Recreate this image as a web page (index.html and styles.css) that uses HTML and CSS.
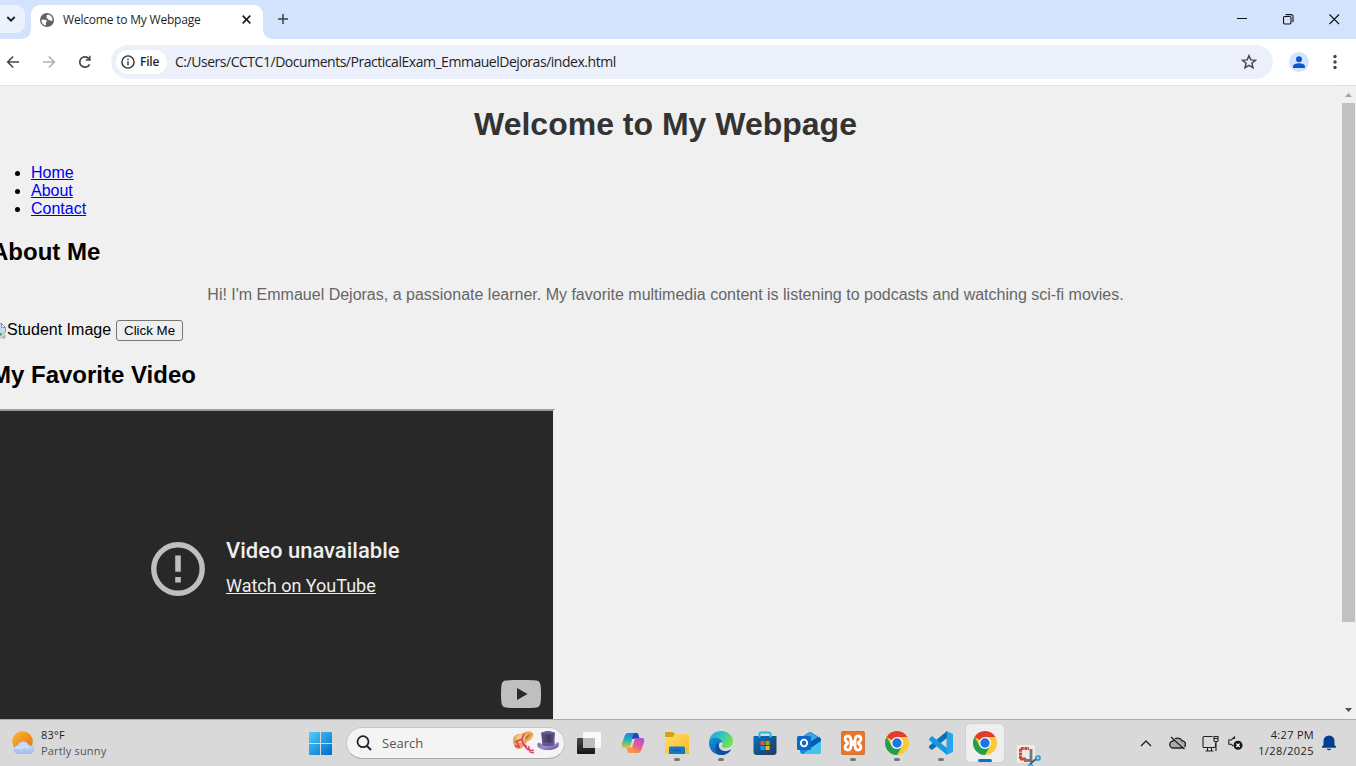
FILE: index.html
```html
<!DOCTYPE html>
<html lang="en">
<head>
<meta charset="utf-8">
<title>Welcome to My Webpage</title>
<link rel="stylesheet" href="styles.css">
</head>
<body>
<svg class="defs" width="0" height="0" aria-hidden="true">
  <defs>
    <linearGradient id="win" x1="0" y1="0" x2="1" y2="1"><stop offset="0" stop-color="#4fd0fb"/><stop offset="1" stop-color="#0068c9"/></linearGradient>
    <linearGradient id="sun" x1="0" y1="0" x2="1" y2="1"><stop offset="0" stop-color="#f3bd2b"/><stop offset="1" stop-color="#ee6a12"/></linearGradient>
    <linearGradient id="cloud" x1="0" y1="0" x2="0" y2="1"><stop offset="0" stop-color="#d3e3fb"/><stop offset="1" stop-color="#a3bff0"/></linearGradient>
    <linearGradient id="folder" x1="0" y1="0" x2="1" y2="1"><stop offset="0" stop-color="#ffdf70"/><stop offset="1" stop-color="#fbb91a"/></linearGradient>
    <linearGradient id="edgeTop" x1="0" y1="0" x2="1" y2=".5"><stop offset="0" stop-color="#239fd8"/><stop offset=".5" stop-color="#31c3c4"/><stop offset="1" stop-color="#6ee352"/></linearGradient>
    <linearGradient id="edgeLow" x1="0" y1="0" x2="1" y2="1"><stop offset="0" stop-color="#1592df"/><stop offset="1" stop-color="#0c4da0"/></linearGradient>
    <linearGradient id="store" x1="0" y1="0" x2="1" y2="1"><stop offset="0" stop-color="#0c6cbd"/><stop offset="1" stop-color="#253858"/></linearGradient>
    <linearGradient id="copA" x1="0" y1="0" x2="0" y2="1"><stop offset="0" stop-color="#1586dd"/><stop offset=".5" stop-color="#28b5b0"/><stop offset="1" stop-color="#e9cb21"/></linearGradient>
    <linearGradient id="copB" x1=".8" y1="0" x2=".3" y2="1"><stop offset="0" stop-color="#a755dc"/><stop offset=".5" stop-color="#ed5b8d"/><stop offset="1" stop-color="#fd9b4b"/></linearGradient>
    <linearGradient id="dark" x1="0" y1="0" x2="0" y2="1"><stop offset="0" stop-color="#484846"/><stop offset="1" stop-color="#161616"/></linearGradient>
    <linearGradient id="hat" x1="0" y1="0" x2="1" y2="0"><stop offset="0" stop-color="#665887"/><stop offset=".6" stop-color="#423460"/><stop offset="1" stop-color="#6d5b9c"/></linearGradient>
    <linearGradient id="brim" x1="0" y1="0" x2="1" y2="1"><stop offset="0" stop-color="#7864a9"/><stop offset=".5" stop-color="#9d8acf"/><stop offset="1" stop-color="#54427f"/></linearGradient>
    <symbol id="chrome" viewBox="0 0 24 24">
      <circle cx="12" cy="12" r="12" fill="#fcc934"/>
      <path d="M12 12 1.61 6A12 12 0 0 1 22.39 6H12z" fill="#e33b2e"/>
      <path d="M1.61 6A12 12 0 0 0 12 24l5.2-9L12 12 6.8 15z" fill="#249d51"/>
      <circle cx="12" cy="12" r="6" fill="#fff"/>
      <circle cx="12" cy="12" r="4.7" fill="#1f73e8"/>
    </symbol>
  </defs>
</svg>
<div class="screen">
  <div class="tabs">
    <div class="tab-search"><svg width="10" height="8" viewBox="0 0 10 8"><path d="M1.3 2 5 5.7 8.7 2" fill="none" stroke="#1f1f1f" stroke-width="1.9"/></svg></div>
    <div class="tab">
      <svg class="globe" width="14" height="14" viewBox="0 0 14 14"><circle cx="7" cy="7" r="7" fill="#5f6368"/><path d="M8.500 1.400C6 2 6.200 3.300 7.200 3.700 5.800 4.400 6.500 5.500 7.500 5.600c1.200.2.2 1.700 1.800 1.700 1.400 0 1.700 1.100 3.100.5A5.800 5.800 0 0 0 8.500 1.400M1.600 6.400c2.100.3 4.500 0 5.200 1.200.6 1.200-.6 1.300-.9 2-.3.900.2 1.500-.1 2.800A5.700 5.700 0 0 1 1.600 6.400" fill="#fff"/></svg>
      <span class="tab-title">Welcome to My Webpage</span>
      <svg class="tab-close" width="9" height="9" viewBox="0 0 9 9"><path d="m.7.7 7.600 7.600m0-7.600L.7 8.300" stroke="#1f1f1f" stroke-width="1.700"/></svg>
    </div>
    <svg class="plus" width="10" height="10" viewBox="0 0 10 10"><path d="M5 0v10M0 5h10" stroke="#3c4043" stroke-width="1.5"/></svg>
    <div class="window-controls">
      <svg width="11" height="11" viewBox="0 0 11 11"><path d="M0 4.500h10" stroke="#111"/></svg>
      <svg width="11" height="11" viewBox="0 0 11 11"><rect x=".5" y="2.5" width="7.5" height="7.5" rx="1.4" fill="none" stroke="#111" stroke-width="1.1"/><path d="M2.6.6H8a2 2 0 0 1 2 2v5.6" fill="none" stroke="#111" stroke-width="1.1"/></svg>
      <svg width="11" height="11" viewBox="0 0 11 11"><path d="m.5.5 9.500 9.500m0-9.500L.5 10" stroke="#111" stroke-width="1.1"/></svg>
    </div>
  </div>
  <div class="toolbar">
    <svg class="nav" width="14" height="14" viewBox="0 0 14 14"><path d="M13 7H2M7.2 1.5 1.7 7l5.5 5.5" fill="none" stroke="#474747" stroke-width="1.6"/></svg>
    <svg class="nav" width="14" height="14" viewBox="0 0 14 14"><path d="M1 7h11M6.8 1.5 12.3 7l-5.5 5.5" fill="none" stroke="#b1b1b1" stroke-width="1.6"/></svg>
    <svg class="nav reload" width="14" height="14" viewBox="0 0 14 14"><path d="M11.6 9.3A5.2 5.2 0 1 1 10.9 3.6l1.3 1.4" fill="none" stroke="#474747" stroke-width="1.7"/><path d="M12.6.8v5H7.8V4.3h3.3V.8z" fill="#474747"/></svg>
    <div class="omnibox">
      <div class="chip">
        <svg width="14" height="14" viewBox="0 0 14 14"><circle cx="7" cy="7" r="6.1" fill="none" stroke="#303134" stroke-width="1.4"/><path d="M7 6.2v4M7 3.6V5" stroke="#303134" stroke-width="1.4"/></svg>
        <span>File</span>
      </div>
      <span class="url">C:/Users/CCTC1/Documents/PracticalExam_EmmauelDejoras/index.html</span>
      <svg class="star" width="16" height="16" viewBox="0 0 16 16"><path d="m8 1.7 1.8 4.2 4.6.4-3.5 3 1.1 4.5-4-2.4-4 2.4 1.1-4.5-3.5-3 4.6-.4z" fill="none" stroke="#474747" stroke-width="1.5"/></svg>
    </div>
    <svg class="avatar" width="20" height="20" viewBox="0 0 20 20"><circle cx="10" cy="10" r="10" fill="#d3e3fd"/><circle cx="10" cy="7.2" r="3" fill="#0b57d0"/><path d="M4 16v-1.6c0-2.1 3.2-3.2 6-3.2s6 1.1 6 3.2V16z" fill="#0b57d0"/></svg>
    <svg class="dots" width="4" height="16" viewBox="0 0 4 16"><g fill="#474747"><circle cx="2" cy="2.5" r="1.7"/><circle cx="2" cy="8" r="1.7"/><circle cx="2" cy="13.5" r="1.7"/></g></svg>
  </div>
  <div class="viewport">
    <div class="page">
      <h1>Welcome to My Webpage</h1>
      <ul>
        <li><a href="#home">Home</a></li>
        <li><a href="#about">About</a></li>
        <li><a href="#contact">Contact</a></li>
      </ul>
      <h2>About Me</h2>
      <p>Hi! I'm Emmauel Dejoras, a passionate learner. My favorite multimedia content is listening to podcasts and watching sci-fi movies.</p>
      <div class="media-row">
        <svg width="16" height="16" viewBox="0 0 16 16"><path d="M1.500.500h9l4 4V9l-8 6.500h-5z" fill="#c6d9f7" stroke="#9a9fa4"/><path d="M10.5.5v4h4z" fill="#fff" stroke="#8a8f94"/><path d="M2 14v-2l5-4 4 3-4.500 4H2z" fill="#43a235"/><path d="m9 15.500 5.500-4.500v4.500z" fill="#aeb2b5"/></svg><span class="alt">Student Image</span>
        <button type="button">Click Me</button>
      </div>
      <h2>My Favorite Video</h2>
      <div class="video">
        <div class="notice">
          <svg width="54" height="54" viewBox="0 0 54 54"><circle cx="27" cy="27" r="24.2" fill="none" stroke="#bfbfbf" stroke-width="5.4"/><path d="M24.2 13.5h5.6v16.3h-5.6zM24.2 35.1h5.6v5.4h-5.6z" fill="#bfbfbf"/></svg>
          <div class="notice-text"><strong>Video unavailable</strong><a href="#watch">Watch on YouTube</a></div>
        </div>
        <svg class="yt" width="40" height="28" viewBox="0 0 40 28"><path d="M20 0c9 0 13 .2 15.500.600 2.500.500 3.600 1.700 4 4.400.7 5 .7 13 0 18-.4 2.700-1.500 3.900-4 4.400C33 27.800 29 28 20 28s-13-.2-15.500-.6C2 26.900.9 25.700.5 23c-.7-5-.7-13 0-18C.9 2.300 2 1.100 4.500.6 7 .2 11 0 20 0" fill="#bfbfbf"/><path d="m16 8 10.500 6L16 20z" fill="#282828"/></svg>
      </div>
    </div>
    <div class="scrollbar">
      <svg width="15" height="17" viewBox="0 0 15 17"><path d="M4 11 7.500 7 11 11z" fill="#a3a3a3"/></svg>
      <div class="track"><div class="thumb"></div></div>
      <svg width="15" height="17" viewBox="0 0 15 17"><path d="m4 6 3.500 4L11 6z" fill="#505050"/></svg>
    </div>
  </div>
  <div class="taskbar">
    <div class="weather">
      <svg width="23" height="24" viewBox="0 0 23 24"><circle cx="10.500" cy="10.500" r="10.300" fill="url(#sun)"/><path d="M6 22.500a4.200 4.200 0 0 1-.4-8.300 6.200 6.200 0 0 1 11.300-.1 4.300 4.300 0 0 1 1.400 8.400z" fill="url(#cloud)" stroke="#8eaee8" stroke-width=".6"/><path d="M2.500 18c2-2.500 5-1.500 6 0 2-3 6-3 7.500-.5" fill="none" stroke="#f0f5ff" stroke-width="1"/></svg>
      <div class="weather-text"><span>83°F</span><span class="muted">Partly sunny</span></div>
    </div>
    <svg class="start" width="23" height="23" viewBox="0 0 23 23"><path d="M1 0h10v11H0V1a1 1 0 0 1 1-1m11 0h10a1 1 0 0 1 1 1v10H12zM0 12h11v11H1a1 1 0 0 1-1-1zm12 0h11v10a1 1 0 0 1-1 1H12z" fill="url(#win)"/></svg>
    <div class="search">
      <svg width="16" height="16" viewBox="0 0 16 16"><circle cx="7" cy="6.700" r="5.500" fill="none" stroke="#222" stroke-width="1.800"/><path d="m11 11 4 4" stroke="#222" stroke-width="2" /></svg>
      <span>Search</span>
      <svg class="hats" width="46" height="24" viewBox="0 0 46 24"><path d="M0 10C0 5 3 3 7 3c3-.6 4-2.500 8-2.600 4 0 6.500 1.600 5 4.600-1.500 3.500-3.500 4.500-6 5.500-2 3-4 6.500-7 7.500-4 .5-7-3-7-8" fill="#e5aa5a"/><path d="M3 6c3-3 8-3 10-1l-3 7-6-1z" fill="#f4cd87"/><path d="M12 6c2-1 4-3 6-3l-5 6z" fill="#bd7a38"/><path d="m11 3-2 5-7 3m2 0 2 5M9 8l1 5 4 3M2 15l5 1" fill="none" stroke="#df4766" stroke-width="1.800"/><path d="M11 13c1 4 3 5 5 6l5 .5M16 15c-1 2 1 3 1 6l4 1" fill="none" stroke="#e63f6d" stroke-width="1.400"/><path d="M28 2c4-2.200 10-2.200 14 0l-1 14H30z" fill="url(#hat)"/><ellipse cx="35" cy="2" rx="6.800" ry="1.300" fill="#67588f"/><path d="M24.500 12.500c2-2 3 .5 5 1.200 4 1.400 8 1.200 12-.3 1.500-.7 3-3 4.300-1.600C47.500 16 42 19 35 19s-12-2.500-10.500-6.500" fill="url(#brim)"/><path d="M29 10c4 2 9 2 12.500 0l-.3 4c-4 1.500-8 1.500-11.900 0z" fill="#655591"/></svg>
    </div>
    <div class="apps">
      <div class="app"><svg width="24" height="24" viewBox="0 0 24 24"><rect x="0" y="7" width="18" height="16" rx="1" fill="url(#dark)"/><rect x="6" y="1" width="18" height="16" rx="1.200" fill="#fafafa"/><path d="M6 7h12v10H7a1 1 0 0 1-1-1z" fill="#bdbdbd"/></svg></div>
      <div class="app"><svg width="24" height="24" viewBox="0 0 24 24"><path d="M7.500 2h7.700c1.600 0 2.100 1 2.600 3l.5 2h-3c-2 0-2.500 1-3.200 3.500L10 17H2.500C.7 17 .5 14.500 1 12.500l2.500-7C4.300 3 5.500 2 7.500 2" fill="url(#copA)"/><path d="M16.500 22H9c-1.700 0-2.300-1-2.800-3l-.5-2h3c2 0 2.600-1 3.300-3.500L14 7h7.500c1.800 0 2 2.500 1.500 4.500l-2.500 7c-.8 2.500-2 3.500-4 3.500" fill="url(#copB)"/><path d="M13.200 2h2c1.600 0 2.100 1 2.600 3l.5 2h-3c-2 0-2.600 1-3.200 3.500L11.200 7c.4-2 .8-4 2-5" fill="#2147bd"/><path d="m11.200 8-2 8.500c.6.300 1.300 0 1.700-.8L13.500 8z" fill="#dedede"/><path d="M10.800 22H9c-1.700 0-2.300-1-2.800-3l-.5-2h3c2 0 2.600-1 3.200-3.500l.800 4.500c-.3 2-1 3.500-1.900 4" fill="#f99643"/></svg></div>
      <div class="app open"><svg width="24" height="24" viewBox="0 0 24 24"><path d="M1 1h7l2 2-2 3H0V2a1 1 0 0 1 1-1" fill="#df9d13"/><path d="M0 6h8l3-3h12a1 1 0 0 1 1 1v19H0z" fill="url(#folder)"/><path d="M4 23v-6q0-1.500 1.500-1.500h13q1.500 0 1.500 1.500v6z" fill="#1378c9"/><path d="M8 19.500h8" stroke="#075a9d" stroke-width="1.200"/></svg></div>
      <div class="app open"><svg width="24" height="24" viewBox="0 0 24 24"><path d="M0 10C1 4 6 0 12 0c7 0 12 5 12 10 0 4-3 7-7 7-3 0-4-1-4-2 0-1 2-2 0-4C9 7 3 7 0 10" fill="url(#edgeTop)"/><path d="M0 12c0-4 4-6 8-5 3 .6 5 2.500 5.500 4.500C10 10 7 14 9 18c2 3.500 7 4.500 13 .5C19 22.500 16 24 12 24 5 24 0 19 0 12" fill="url(#edgeLow)"/><path d="M11 11.500c-3 3 0 8 4 8.500 2.500.3 4.500-.3 7-1.500-2 4-6 5.500-10 5.500-6 0-7-9-3-12q1-.7 2-.5" fill="#114f9d"/></svg></div>
      <div class="app"><svg width="24" height="24" viewBox="0 0 24 24"><path d="M6.500 6V3q0-1.500 1.500-1.500h8Q17.500 1.500 17.500 3v3" fill="none" stroke="#20b9ef" stroke-width="2"/><path d="M.5 5h23v16q0 3-3 3h-17q-3 0-3-3z" fill="url(#store)"/><path d="M5.500 5h2v1.500h-2zm11 0h2v1.500h-2z" fill="#35c6f4"/><path d="M7.500 10h4v4h-4z" fill="#f25022"/><path d="M12.500 10h4v4h-4z" fill="#7fba00"/><path d="M7.500 15h4v4h-4z" fill="#00a4ef"/><path d="M12.500 15h4v4h-4z" fill="#ffb900"/></svg></div>
      <div class="app"><svg width="24" height="24" viewBox="0 0 24 24"><path d="m3 7 9-5.500q1-.6 2 0L23 7q1 .6 1 2v11q0 3-3 3H6q-3 0-3-3z" fill="#1689d8"/><path d="m8 4 4-2.500q1-.6 2 0L23 7l1 4-9 5z" fill="#0759ad"/><path d="M13 1.200 21 6l-8 5-6-6z" fill="#36a8e6"/><path d="m14 11 8-5q2 1 2 3l-10 7z" fill="#0759ad"/><path d="M24 10v10q0 3-3 3H6l12-9z" fill="#43c5ec"/><rect y="5" width="14" height="14" rx="1.500" fill="#0b69c7"/><ellipse cx="7" cy="12" rx="3.100" ry="3.400" fill="none" stroke="#fff" stroke-width="1.900"/></svg></div>
      <div class="app open"><svg width="24" height="24" viewBox="0 0 24 24"><rect x=".3" y=".3" width="23.400" height="23.400" rx="2" fill="#ed7424" stroke="#b95b27" stroke-width=".6"/><path d="M6.500 11.500C3 9 3.500 5 7 5c3 0 3 4.500 3 5.500h4c0-1 0-5.500 3-5.500 3.500 0 4 4 .5 6.500v1C21 15 20.500 19 17 19c-3 0-3-4-3-5.500h-4c0 1.500 0 5.500-3 5.500-3.500 0-4-4-.5-6.500z" fill="none" stroke="#fff" stroke-width="2.800"/></svg></div>
      <div class="app open"><svg width="24" height="24"><use href="#chrome"/></svg></div>
      <div class="app open"><svg width="24" height="24" viewBox="0 0 24 24"><path d="M17.500 0 24 3v18l-6.500 3z" fill="#29a5ed"/><path d="M18 0v7L3 19l-3-2v-2z" fill="#0873ba"/><path d="m0 8 3-3 15 12v7L0 9z" fill="#159ae0"/></svg></div>
      <div class="app active"><svg width="24" height="24"><use href="#chrome"/></svg></div>
      <div class="app snip"><svg width="24" height="23" viewBox="0 0 24 23"><rect width="18" height="18" rx="2" fill="#ececec"/><path d="M3.500 14V3.500H12" fill="none" stroke="#dc4128" stroke-width="3" stroke-dasharray="3 .6"/><path d="M3 14h6" stroke="#dc4128" stroke-width="3"/><path d="M14 4v11.500H7" fill="none" stroke="#777" stroke-width="2.800"/><path d="m13 19 6-5" stroke="#555" stroke-width="2"/><circle cx="21" cy="13" r="2" fill="none" stroke="#2798d5" stroke-width="1.700"/><circle cx="13.500" cy="21.500" r="2" fill="none" stroke="#2798d5" stroke-width="1.700"/></svg></div>
    </div>
    <div class="tray">
      <svg class="chev" width="12" height="7" viewBox="0 0 12 7"><path d="m1 6 5-5 5 5" fill="none" stroke="#222" stroke-width="1.400"/></svg>
      <svg class="tray-cloud" width="17" height="14" viewBox="0 0 17 14"><path d="M4.500 12a3.500 3.500 0 0 1-.4-7 5 5 0 0 1 9-.2A3.600 3.600 0 0 1 12.500 12z" fill="#aaa" stroke="#222" stroke-width="1.400"/><path d="m2.500.5 13.500 12" stroke="#ddd" stroke-width="1.200"/><path d="m2 1 13.500 12" stroke="#222" stroke-width="1.400"/></svg>
      <svg class="net" width="17" height="17" viewBox="0 0 17 17"><path d="M10.500 1.500H2a1 1 0 0 0-1 1v9a1 1 0 0 0 1 1h10.500q1 0 1-1V8M5.500 13v3m4-3v3M3.500 16h8" fill="none" stroke="#222" stroke-width="1.100"/><path d="M12 1.500h4v4q0 1-1 1h-2q-1 0-1-1zM14 6.500V16M12.500 3.500h3" fill="none" stroke="#222" stroke-width="1.100"/></svg>
      <svg class="sound" width="15" height="14" viewBox="0 0 15 14"><path d="M6.500 3V1L3.300 4H.8v4.200h2.500L5 10" fill="none" stroke="#222" stroke-width="1.100"/><circle cx="10" cy="9.300" r="4.500" fill="#161616"/><path d="m8.300 7.600 3.400 3.400m0-3.400L8.300 11" stroke="#fff" stroke-width="1.300"/></svg>
      <div class="clock"><span class="time">4:27 PM</span><span class="date">1/28/2025</span></div>
      <svg class="bell" width="14" height="16" viewBox="0 0 14 16"><path d="M0 12.800v-1.300l1.500-1.600V6a5.500 5.500 0 0 1 11 0v3.900l1.500 1.600v1.300zM5 13.800h4c0 2-4 2-4 0" fill="#033f91"/></svg>
    </div>
  </div>
</div>
</body>
</html>
```
FILE: styles.css
```css
* { box-sizing: border-box; }
body { margin: 0; font-family: "Liberation Sans", Arial, sans-serif; }
svg { display: block; flex: none; }
.defs { position: absolute; }
.screen { width: 1356px; height: 766px; display: flex; flex-direction: column; overflow: hidden; background: #fff; }

.tabs { height: 39px; flex: none; display: flex; align-items: flex-start; background: #d3e3fd; font-family: "Open Sans", "Noto Sans", sans-serif; }
.tab-search { width: 25px; height: 28px; margin-top: 5px; padding-left: 6px; border-radius: 0 9px 9px 0; background: #ebf1fd; display: flex; align-items: center; }
.tab { position: relative; width: 232px; height: 34px; margin: 5px 0 0 6px; padding: 0 12px 5px 9px; display: flex; align-items: center; background: #fff; border-radius: 9px 9px 0 0; }
.tab::before, .tab::after { content: ""; position: absolute; bottom: 0; width: 9px; height: 9px; }
.tab::before { left: -9px; background: radial-gradient(circle at 0 0, transparent 8.500px, #fff 9px); }
.tab::after { right: -9px; background: radial-gradient(circle at 100% 0, transparent 8.500px, #fff 9px); }
.tab-title { margin-left: 9px; font-size: 12px; line-height: 16px; color: #1f1f1f; white-space: nowrap; letter-spacing: -.2px; }
.tab-close { margin-left: auto; }
.plus { margin: 14px 0 0 15px; }
.window-controls { margin: 14px 16px 0 auto; display: flex; gap: 35px; }

.toolbar { height: 47px; flex: none; display: flex; align-items: center; padding: 0 19px 1px 6px; border-bottom: 1px solid #dcdee1; font-family: "Open Sans", "Noto Sans", sans-serif; }
.nav { margin-right: 22px; }
.reload { margin-right: 19px; }
.omnibox { width: 1162px; height: 34px; padding: 0 16px 0 5px; border-radius: 17px; background: #ecf0fa; display: flex; align-items: center; }
.chip { width: 51px; height: 24px; padding-left: 5px; border-radius: 12px; background: #fff; display: flex; align-items: center; gap: 5px; font-size: 12px; font-weight: 600; letter-spacing: -.2px; color: #1f1f1f; }
.url { margin-left: 8px; font-size: 14px; line-height: 20px; color: #1f1f1f; white-space: nowrap; letter-spacing: -.47px; }
.star { margin-left: auto; }
.avatar { margin-left: 16px; }
.dots { margin-left: auto; }

.viewport { height: 633px; flex: none; display: flex; overflow: hidden; background: #f0f0f0; }
.page { width: 1349px; height: 850px; margin-left: -9px; padding-top: .1px; flex: none; color: #000; font-size: 16px; line-height: 18px; }
.page h1 { margin: 20px 0 22px; font-size: 32px; line-height: 36px; text-align: center; color: #333; }
.page h2 { margin: 20px 0; font-size: 24px; line-height: 27px; }
.page ul { margin: 0 0 20px; padding-left: 40px; }
.page a { color: #0000ee; }
.page p { margin: 21px 0 16px; text-align: center; color: #666; }
.media-row { height: 21px; display: flex; align-items: center; }
.media-row .alt { padding-bottom: 2px; }
.media-row button { width: 67px; height: 21px; margin-left: 5px; padding: 0; border: 1px solid #767676; border-radius: 3px; background: #efefef; font: 13.333px "Liberation Sans", Arial, sans-serif; color: #000; }
.video { width: 564px; height: 319px; margin-top: 21px; display: flex; flex-direction: column; justify-content: space-between; border: 2px solid; border-color: #9a9a9a #eee #eee #9a9a9a; background: #282828; background-clip: padding-box; font-family: Roboto, sans-serif; }
.notice { display: flex; align-items: center; gap: 21px; margin: 125px 0 0 158px; }
.notice-text { display: flex; flex-direction: column; align-items: flex-start; padding-bottom: 4px; color: #eee; }
.notice-text strong { font-size: 22px; line-height: 30px; font-weight: 500; white-space: nowrap; }
.page .notice-text a { margin-top: 8px; font-size: 18px; line-height: 24px; color: #eee; white-space: nowrap; }
.yt { margin: 0 12px 18px auto; }
.scrollbar { width: 15px; height: 633px; flex: none; margin-left: auto; display: flex; flex-direction: column; background: #f1f1f1; }
.track { flex: 1; }
.thumb { width: 13px; height: 519px; margin-left: 1px; background: #c1c1c1; }

.taskbar { height: 47px; flex: none; display: flex; align-items: center; border-top: 1px solid #aaa; background: #d9d9d9; font-family: "Open Sans", "Noto Sans", sans-serif; font-size: 11px; line-height: 16px; color: #1c1c1c; }
.weather { width: 309px; padding-left: 12px; display: flex; align-items: center; gap: 6px; }
.weather-text { display: flex; flex-direction: column; }
.weather-text span:first-child { letter-spacing: .25px; }
.muted { color: #555; letter-spacing: .17px; }
.start { margin-top: 1px; }
.search { width: 219px; height: 32px; margin-left: 14px; padding: 0 5px 0 9px; display: flex; align-items: center; border: 1px solid #c7c7c7; border-bottom-color: #aaa; border-radius: 16px; background: #f4f4f4; font-size: 13px; color: #555; }
.search span { margin-left: 10px; }
.hats { margin-left: auto; }
.apps { display: flex; margin-left: 2px; }
.app { width: 44px; height: 46px; display: flex; flex-direction: column; align-items: center; padding-top: 11px; }
.open::after { content: ""; width: 6px; height: 3px; margin-top: 3px; border-radius: 2px; background: #777; }
.active { width: 38px; height: 38px; margin: 4px 3px 0; padding-top: 7px; border-radius: 4px; background: #eee; box-shadow: 0 0 1px #999; }
.active::after { content: ""; width: 14px; height: 3px; margin-top: 4px; border-radius: 2px; background: #0873cd; }
.snip { padding-top: 25px; }
.snip svg { margin-left: -1px; }
.tray { display: flex; align-items: center; margin-left: auto; padding-right: 20px; }
.tray-cloud { margin-left: 17px; }
.net { margin-left: 16px; }
.sound { margin-left: 9px; }
.clock { width: 71px; display: flex; flex-direction: column; align-items: flex-end; }
.time { letter-spacing: .3px; }
.date { letter-spacing: .42px; }
.bell { margin-left: 8px; }
```
